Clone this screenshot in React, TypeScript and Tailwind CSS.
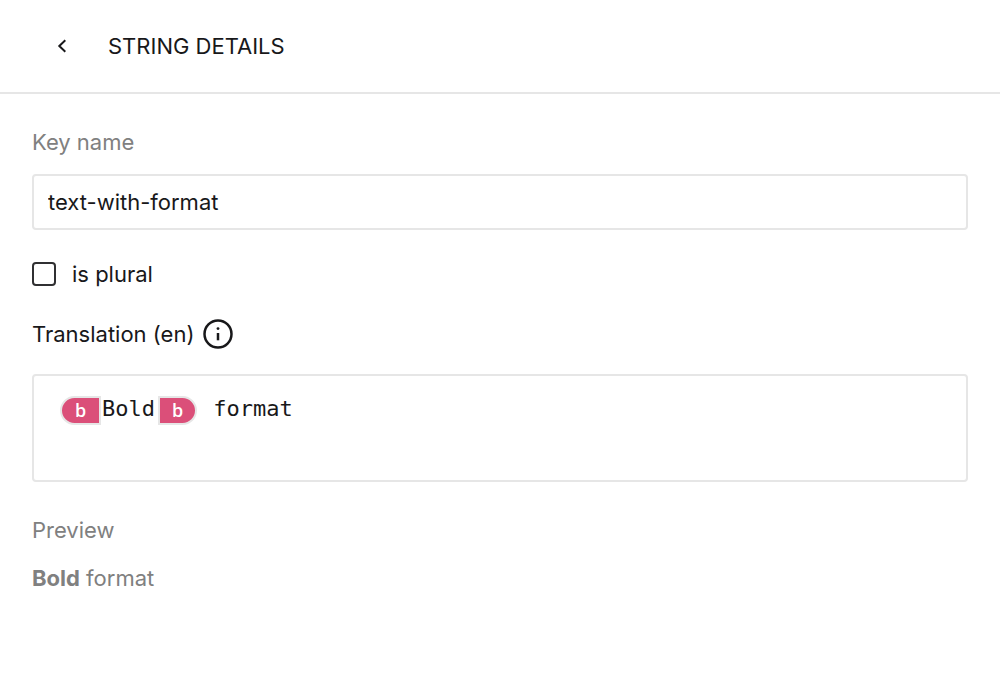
export default function App() {
  return (
    <div className="min-h-screen bg-white font-['Inter',sans-serif] text-[22px] leading-8 text-[#18181a]">
      <header className="flex items-center gap-4 border-b-2 border-[#e6e6e6] px-8 py-4">
        <button type="button" aria-label="Back" className="flex size-[60px] shrink-0 items-center justify-center">
          <svg viewBox="0 0 24 24" className="size-6" fill="none" stroke="currentColor" strokeWidth="2">
            <path d="M15.3 6.2 9.3 12l6 5.8" />
          </svg>
        </button>
        <h1>STRING DETAILS</h1>
      </header>
      <main className="px-8 pt-8">
        <label htmlFor="key" className="block text-[#808080]">Key name</label>
        <input id="key" defaultValue="text-with-format" className="mt-4 block h-14 w-full rounded-sm border-2 border-[#e6e6e6] px-3.5 outline-none" />
        <label className="mt-7 flex items-center gap-4">
          <input type="checkbox" className="size-6 appearance-none rounded border-2 border-[#303032] checked:bg-[#18181a]" />
          is plural
        </label>
        <div className="mt-7 flex items-center gap-2">
          <span id="translation">Translation (en)</span>
          <svg viewBox="0 0 32 32" className="size-8" fill="none" stroke="currentColor" strokeWidth="2.5">
            <circle cx="16" cy="16" r="13.5" />
            <path d="M16 15v7.3" />
            <circle cx="16" cy="10.6" r="1.4" fill="currentColor" stroke="none" />
          </svg>
        </div>
        <div
          role="textbox"
          aria-labelledby="translation"
          contentEditable
          suppressContentEditableWarning
          className="mt-6 h-[108px] w-full rounded-sm border-2 border-[#e6e6e6] px-[26px] pt-[17px] font-['DejaVu_Sans_Mono',monospace] whitespace-pre-wrap outline-none"
        >
          <span contentEditable={false} className="mr-px inline-flex h-[29px] w-[41px] items-center justify-center rounded-l-full border-2 border-[#e6e6e6] bg-[#db4f79] align-middle font-['Open_Sans',sans-serif] text-lg leading-6 font-semibold text-white">b</span>
          Bold
          <span contentEditable={false} className="mx-[3px] inline-flex h-[29px] w-[39px] items-center justify-center rounded-r-full border-2 border-[#e6e6e6] bg-[#db4f79] align-middle font-['Open_Sans',sans-serif] text-lg leading-6 font-semibold text-white">b</span>
          {" format"}
        </div>
        <h2 className="mt-8 text-[#808080]">Preview</h2>
        <p className="mt-4 text-[#808080]"><b>Bold</b> format</p>
      </main>
    </div>
  );
}
